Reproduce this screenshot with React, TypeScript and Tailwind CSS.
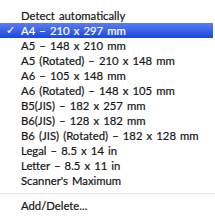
const items = [
  "Detect automatically",
  "A4 – 210 x 297 mm",
  "A5 – 148 x 210 mm",
  "A5 (Rotated) – 210 x 148 mm",
  "A6 – 105 x 148 mm",
  "A6 (Rotated) – 148 x 105 mm",
  "B5(JIS) – 182 x 257 mm",
  "B6(JIS) – 128 x 182 mm",
  "B6 (JIS) (Rotated) – 182 x 128 mm",
  "Legal – 8.5 x 14 in",
  "Letter – 8.5 x 11 in",
  "Scanner's Maximum",
];

const selected = 1;

export default function App() {
  return (
    <div className="w-[215px] h-[218px] bg-white overflow-hidden text-[11.3px] [word-spacing:1.2px] [-webkit-text-stroke:0.2px] text-[#161616] font-['Lato','Noto_Sans',sans-serif]">
      <div className="pt-[8px]">
        {items.map((label, i) => (
          <div
            key={label}
            className={
              i === selected
                ? "h-[15px] flex items-center mr-[2px] bg-gradient-to-b from-[#5a7cf2] to-[#1c45e2] text-white"
                : "h-[15px] flex items-center"
            }
          >
            <span className="w-[21px] pl-[6px] text-[11px] leading-[15px] font-['DejaVu_Sans',sans-serif]">
              {i === selected ? "✓" : ""}
            </span>
            <span className="leading-[15px] whitespace-nowrap">{label}</span>
          </div>
        ))}
        <div className="h-[10px] flex items-center">
          <div className="w-full h-px bg-[#e2e2e2]" />
        </div>
        <div className="h-[15px] flex items-center pl-[21px]">
          <span className="leading-[15px]">Add/Delete...</span>
        </div>
      </div>
    </div>
  );
}
